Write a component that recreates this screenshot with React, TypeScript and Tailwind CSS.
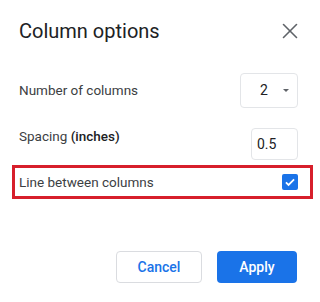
import { X } from 'lucide-react'

export default function App() {
  return (
    <div
      className="w-[320px] h-[302px] bg-white flex flex-col pt-[19px]"
      style={{ fontFamily: 'Roboto, "Liberation Sans", sans-serif' }}
    >
      {/* header */}
      <div className="flex items-center justify-between pl-[19px] pr-[17px] h-[24px]">
        <h1 className="text-[20px] leading-[24px] text-[#202124]">Column options</h1>
        <X className="w-[26px] h-[26px] text-[#5f6368]" strokeWidth={1.5} />
      </div>

      {/* number of columns */}
      <div className="mt-[30px] flex items-center justify-between pl-[19px] pr-[22px]">
        <span className="text-[13.5px] text-[#3c4043]">Number of columns</span>
        <div className="w-[58px] h-[35px] rounded-[4px] border border-[#e3e5e8] flex items-center pl-[19px] pr-[8px] justify-between">
          <span className="text-[14px] text-[#202124]">2</span>
          <span className="w-0 h-0 border-l-[3px] border-r-[3px] border-t-[3px] border-l-transparent border-r-transparent border-t-[#5f6368]" />
        </div>
      </div>

      {/* spacing */}
      <div className="mt-[20px] flex items-start justify-between pl-[19px] pr-[22px]">
        <span className="text-[13.5px] leading-[16px] text-[#3c4043]">
          Spacing <span className="font-medium text-[#202124]">(inches)</span>
        </span>
        <div className="w-[47px] h-[32px] rounded-[4px] border border-[#e3e5e8] flex items-center pl-[5px]">
          <span className="text-[14px] text-[#202124]">0.5</span>
        </div>
      </div>

      {/* line between columns */}
      <div className="mt-[5px] ml-[12px] w-[301px] h-[34px] border-[3px] border-[#d71f2b] flex items-center justify-between pl-[4px] pr-[12px]">
        <span className="text-[13.5px] text-[#3c4043]">Line between columns</span>
        <div className="w-[16px] h-[16px] rounded-[2px] bg-[#1a73e8] flex items-center justify-center">
          <svg viewBox="0 0 24 24" className="w-[14px] h-[14px]" fill="none" stroke="white" strokeWidth={3}>
            <path d="M5 12.5l4.5 4.5L19 7.5" />
          </svg>
        </div>
      </div>

      {/* buttons */}
      <div className="mt-[52px] flex justify-end gap-[15px] pr-[23px]">
        <button className="w-[86px] h-[32px] rounded-[4px] border border-[#dadce0] bg-white text-[14px] font-medium text-[#1a73e8]">
          Cancel
        </button>
        <button className="w-[80px] h-[32px] rounded-[4px] bg-[#1a73e8] text-[14px] font-medium text-white">
          Apply
        </button>
      </div>
    </div>
  )
}
